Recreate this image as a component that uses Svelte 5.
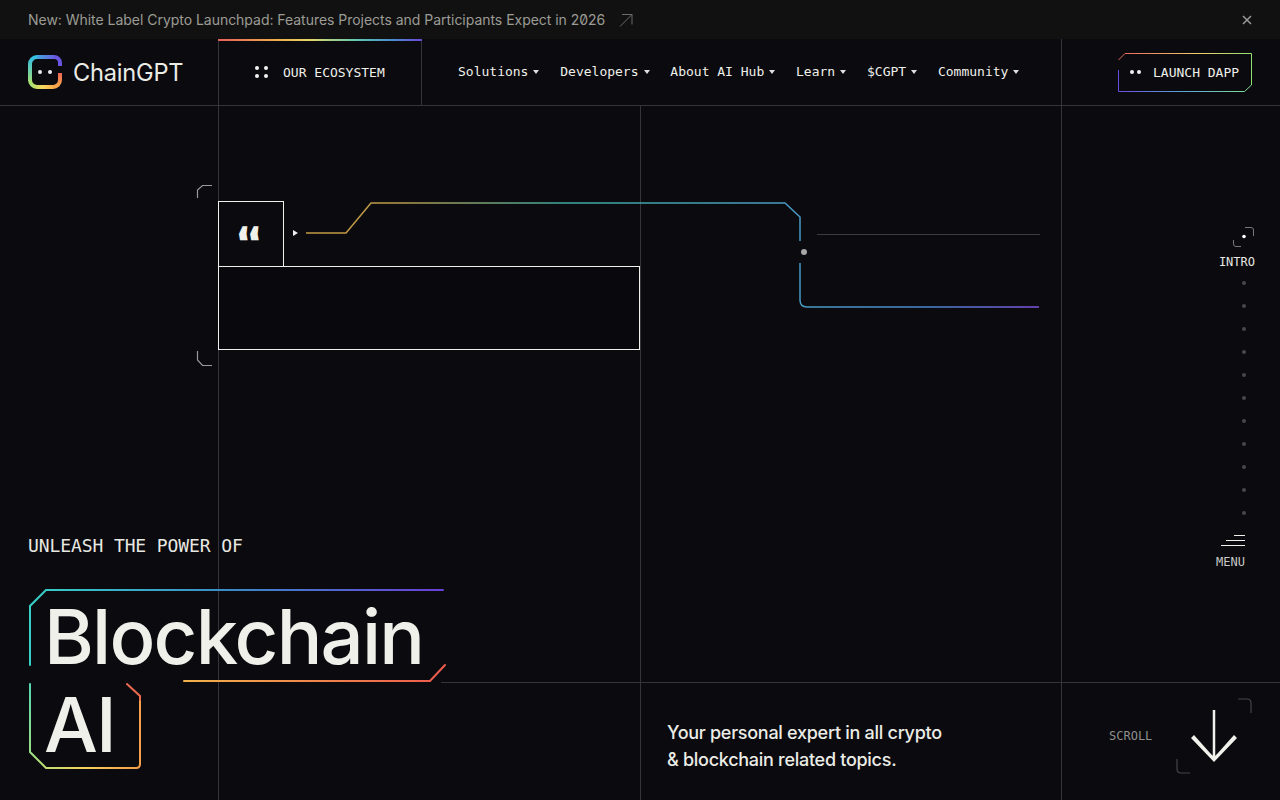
<script>
  const nav = ["Solutions", "Developers", "About AI Hub", "Learn", "$CGPT", "Community"];
  const railDots = Array.from({ length: 11 });
</script>

<div class="page">
  <div class="promo">
    <span class="promo-text">New: White Label Crypto Launchpad: Features Projects and Participants Expect in 2026</span>
    <svg class="promo-arrow" width="14" height="14" viewBox="0 0 14 14" fill="none" stroke="#6b6b68">
      <path d="M1 13.500 13 1.500M3 1.500h10v10" />
    </svg>
    <svg class="promo-close" width="10" height="10" viewBox="0 0 10 10" fill="none" stroke="#9a9a9a" stroke-width="1.500">
      <path d="M1 1l8 8M9 1 1 9" />
    </svg>
  </div>

  <header class="header">
    <div class="brand">
      <svg width="36" height="36" viewBox="0 0 36 36" fill="none" stroke-width="4">
        <defs>
          <linearGradient id="lg-a" gradientUnits="userSpaceOnUse" x1="4" y1="0" x2="30" y2="0"><stop offset="0" stop-color="#35c0e0" /><stop offset="1" stop-color="#6a55e0" /></linearGradient>
          <linearGradient id="lg-b" gradientUnits="userSpaceOnUse" x1="0" y1="4" x2="0" y2="30"><stop offset="0" stop-color="#35c0e0" /><stop offset="1" stop-color="#a8e070" /></linearGradient>
          <linearGradient id="lg-c" gradientUnits="userSpaceOnUse" x1="4" y1="0" x2="28" y2="0"><stop offset="0" stop-color="#a8e070" /><stop offset=".5" stop-color="#f6d85c" /><stop offset="1" stop-color="#f7a64a" /></linearGradient>
          <linearGradient id="lg-d" gradientUnits="userSpaceOnUse" x1="0" y1="32" x2="0" y2="18"><stop offset="0" stop-color="#f7a64a" /><stop offset="1" stop-color="#ee5f54" /></linearGradient>
        </defs>
        <path d="M10 3h17" stroke="url(#lg-a)" />
        <path d="M27 3a6 6 0 0 1 6 6v3" stroke="#6a55e0" />
        <path d="M10 3a7 7 0 0 0-7 7v16" stroke="url(#lg-b)" />
        <path d="M3 26a7 7 0 0 0 7 7h16" stroke="url(#lg-c)" />
        <path d="M26 33a7 7 0 0 0 7-7v-7" stroke="url(#lg-d)" />
        <circle cx="13" cy="18" r="2" fill="#eee" stroke="none" />
        <circle cx="23" cy="18" r="2" fill="#eee" stroke="none" />
      </svg>
      <span class="brand-name">ChainGPT</span>
    </div>

    <div class="eco-tab">
      <span class="dots-4"><i></i><i></i><i></i><i></i></span>
      <span>OUR ECOSYSTEM</span>
    </div>

    <nav class="nav">
      {#each nav as item}
        <span class="nav-item">{item}<i class="caret"></i></span>
      {/each}
    </nav>

    <div class="cta-cell">
      <div class="cta">
        <svg class="cta-frame" width="135" height="40" viewBox="0 0 135 40" fill="none">
          <defs>
            <linearGradient id="cta-top" gradientUnits="userSpaceOnUse" x1="0" y1="0" x2="134" y2="0"><stop offset="0" stop-color="#e8645a" /><stop offset=".6" stop-color="#f2cf6e" /><stop offset="1" stop-color="#8fe070" /></linearGradient>
            <linearGradient id="cta-bot" gradientUnits="userSpaceOnUse" x1="0" y1="0" x2="134" y2="0"><stop offset="0" stop-color="#6a4de0" /><stop offset=".5" stop-color="#5aa8d8" /><stop offset="1" stop-color="#80e090" /></linearGradient>
          </defs>
          <path d="M.5 7 7 .5h126.500V32" stroke="url(#cta-top)" />
          <path d="M.5 17V38.500h126l7-6.500" stroke="url(#cta-bot)" />
        </svg>
        <span class="dots-2"><i></i><i></i></span>
        <span>LAUNCH DAPP</span>
      </div>
    </div>
  </header>

  <main class="stage">
    <div class="guides"><i></i><i></i><i></i></div>

    <svg class="art" width="1280" height="694" viewBox="0 106 1280 694" fill="none">
      <defs>
        <linearGradient id="wire" gradientUnits="userSpaceOnUse" x1="306" y1="0" x2="1039" y2="0">
          <stop offset="0" stop-color="#c49a42" />
          <stop offset=".12" stop-color="#bc9a48" />
          <stop offset=".35" stop-color="#3fa89e" />
          <stop offset=".68" stop-color="#4a9ac4" />
          <stop offset=".85" stop-color="#4a85cc" />
          <stop offset="1" stop-color="#7f52e0" />
        </linearGradient>
        <linearGradient id="title-a" gradientUnits="userSpaceOnUse" x1="30" y1="0" x2="443" y2="0">
          <stop offset="0" stop-color="#36d0c8" />
          <stop offset=".5" stop-color="#3b88c8" />
          <stop offset="1" stop-color="#6a3fd8" />
        </linearGradient>
        <linearGradient id="title-b" gradientUnits="userSpaceOnUse" x1="184" y1="0" x2="445" y2="0">
          <stop offset="0" stop-color="#f2b24a" />
          <stop offset="1" stop-color="#ee5a4e" />
        </linearGradient>
        <linearGradient id="title-c" gradientUnits="userSpaceOnUse" x1="30" y1="684" x2="140" y2="760">
          <stop offset="0" stop-color="#55d8b0" />
          <stop offset=".35" stop-color="#a8e07c" />
          <stop offset=".7" stop-color="#f6d25c" />
          <stop offset="1" stop-color="#f6a04a" />
        </linearGradient>
      </defs>

      <path d="M197.500 198v-8l5-4.500h9.500M197.500 351v9l5 5.500h9.500" stroke="#999" stroke-width="1.200" />
      <path d="M293 230l5 3-5 3z" fill="#eee" />
      <path d="M306 233h40l25-30h414l15 14v24M800 263v37q0 7 7 7h232" stroke="url(#wire)" stroke-width="1.500" />
      <path d="M817 234.500h223" stroke="#3c3c40" />
      <circle cx="804" cy="252" r="3" fill="#a8a8a8" />

      <path d="M30 665V606l16-16h397" stroke="url(#title-a)" stroke-width="2" stroke-linecap="round" />
      <path d="M184 681h246l15-16" stroke="url(#title-b)" stroke-width="2" stroke-linecap="round" />
      <path d="M30 684v68l16 16h90" stroke="url(#title-c)" stroke-width="2" stroke-linecap="round" />
      <path d="M136 768q4 0 4-4v-64" stroke="#f6a04a" stroke-width="2" />
      <path d="M140 700v-4l-13-12" stroke="#ec6a50" stroke-width="2" stroke-linecap="round" />

      <path d="M1238 699h9q4 0 4 4v10M1177 759v10q0 4 4 4h9" stroke="#44444a" stroke-width="1.200" />
      <path d="M1214 710v48" stroke="#f2f2ec" stroke-width="2.500" />
      <path d="M1191 738l3-3 16 18 4 4 4-4 16-18 3 3-23 24z" fill="#f2f2ec" />
    </svg>

    <section class="quote">
      <div class="quote-mark"><span>“</span></div>
      <div class="quote-body"></div>
    </section>

    <aside class="rail">
      <svg class="rail-icon" width="24" height="22" viewBox="0 0 24 22" fill="none" stroke="#77777c">
        <path d="M14 1.500h6q2.500 0 2.500 2.500v6M2.500 14v4q0 2.500 2.500 2.500h5" />
        <circle cx="13" cy="10.500" r="1.800" fill="#fff" stroke="none" />
      </svg>
      <span class="rail-label">INTRO</span>
      <div class="rail-dots">
        {#each railDots as _}
          <i></i>
        {/each}
      </div>
      <div class="burger"><i></i><i></i><i></i></div>
      <span class="rail-label menu">MENU</span>
    </aside>

    <div class="bottom">
      <div class="hero">
        <p class="eyebrow">UNLEASH THE POWER OF</p>
        <h1 class="title">Blockchain<br />AI</h1>
      </div>
      <div class="cell-line"></div>
      <div class="cell-line tagline">
        <p>Your personal expert in all crypto<br />&amp; blockchain related topics.</p>
      </div>
      <div class="cell-line scroll">
        <span>SCROLL</span>
      </div>
    </div>
  </main>
</div>

<style>
  :global(body) {
    background: #0a0a0f;
  }

  .page {
    width: 1280px;
    height: 800px;
    overflow: hidden;
    display: flex;
    flex-direction: column;
    background: #0a0a0f;
    color: #f0f0ea;
    font-family: "Inter", "Liberation Sans", sans-serif;
  }

  .promo {
    height: 39px;
    flex: none;
    display: flex;
    align-items: center;
    padding: 0 28px;
    background: #111112;
    color: #9c9c94;
    font-size: 14px;
    letter-spacing: -0.03px;
    font-feature-settings: "zero";
  }

  .promo-arrow {
    margin-left: 14px;
  }

  .promo-close {
    margin-left: auto;
    margin-right: 0;
  }

  .header {
    height: 67px;
    flex: none;
    display: flex;
    border-bottom: 1px solid #34343a;
    box-sizing: border-box;
    font-family: "DejaVu Sans Mono", monospace;
    font-size: 13px;
  }

  .brand {
    width: 218px;
    flex: none;
    display: flex;
    align-items: center;
    padding: 0 0 0 27px;
    box-sizing: border-box;
    gap: 10px;
  }

  .brand-name {
    font-family: "Inter", sans-serif;
    font-size: 23.600px;
    letter-spacing: -0.2px;
    color: #ecece6;
  }

  .eco-tab {
    position: relative;
    width: 204px;
    flex: none;
    box-sizing: border-box;
    display: flex;
    align-items: center;
    gap: 15px;
    padding-left: 36px;
    border-left: 1px solid #34343a;
    border-right: 1px solid #34343a;
  }

  .eco-tab::before {
    content: "";
    position: absolute;
    left: -1px;
    right: -1px;
    top: 0;
    height: 2px;
    background: linear-gradient(90deg, #e8605a, #f0b04c 30%, #e6d86a 45%, #5fc8b0 68%, #4a8fd0 85%, #6a48d8);
  }

  .dots-4 {
    display: grid;
    grid-template-columns: 4px 4px;
    gap: 4px 5px;
  }

  .dots-4 i,
  .dots-2 i {
    width: 4px;
    height: 4px;
    border-radius: 50%;
    background: #f2f2f2;
  }

  .nav {
    width: 640px;
    flex: none;
    box-sizing: border-box;
    display: flex;
    align-items: center;
    gap: 20.800px;
    padding: 0 0 2px 36px;
    border-right: 1px solid #34343a;
  }

  .nav-item {
    display: flex;
    align-items: center;
    gap: 5px;
    color: #f0f0ea;
  }

  .caret {
    width: 0;
    height: 0;
    margin-top: 1px;
    border-left: 3.500px solid transparent;
    border-right: 3.500px solid transparent;
    border-top: 4px solid #e0e0e0;
  }

  .cta-cell {
    flex: 1;
    display: flex;
    align-items: center;
    justify-content: flex-end;
    padding: 1px 27px 0 0;
  }

  .cta {
    position: relative;
    width: 135px;
    height: 40px;
    box-sizing: border-box;
    display: flex;
    align-items: center;
    gap: 12px;
    padding: 0 0 1px 12px;
  }

  .cta-frame {
    position: absolute;
    inset: 0;
  }

  .dots-2 {
    display: flex;
    gap: 3px;
  }

  .stage {
    position: relative;
    flex: 1;
    display: flex;
    flex-direction: column;
    justify-content: space-between;
  }

  .guides {
    position: absolute;
    inset: 0;
  }

  .guides i {
    position: absolute;
    top: 0;
    bottom: 0;
    width: 1px;
    background: #34343a;
  }

  .guides i:nth-child(1) {
    left: 218px;
  }

  .guides i:nth-child(2) {
    left: 640px;
  }

  .guides i:nth-child(3) {
    left: 1061px;
  }

  .art {
    position: absolute;
    inset: 0;
    pointer-events: none;
  }

  .quote {
    position: relative;
    margin: 95px 0 0 218px;
    width: 422px;
  }

  .quote-mark {
    width: 66px;
    height: 65px;
    box-sizing: border-box;
    padding-top: 20px;
    border: 1px solid #f0f0ea;
    border-bottom: 0;
    display: flex;
    justify-content: center;
    font-family: "DejaVu Sans", sans-serif;
    font-weight: 700;
    font-size: 45px;
    line-height: 44px;
    background: #0a0a0f;
  }

  .quote-mark span {
    display: block;
    transform: skewX(10deg);
  }

  .quote-body {
    height: 84px;
    box-sizing: border-box;
    border: 1px solid #f0f0ea;
    background: #09090d;
  }

  .rail {
    position: absolute;
    top: 120px;
    right: 25px;
    width: 40px;
    display: flex;
    flex-direction: column;
    align-items: flex-end;
    font-family: "DejaVu Sans Mono", monospace;
  }

  .rail-icon {
    display: block;
  }

  .rail-label {
    margin-top: 7px;
    font-size: 12px;
    line-height: 14px;
    color: #e8e8e2;
  }

  .rail-dots {
    width: 100%;
    display: flex;
    flex-direction: column;
    align-items: flex-end;
    gap: 19px;
    margin-top: 12px;
    padding-right: 9px;
    box-sizing: border-box;
  }

  .rail-dots i {
    width: 4px;
    height: 4px;
    border-radius: 50%;
    background: #48484c;
  }

  .burger {
    display: flex;
    flex-direction: column;
    align-items: flex-end;
    gap: 4px;
    margin: 20px 10px 0 0;
  }

  .burger i {
    height: 1px;
    background: #f0f0ea;
  }

  .burger i:nth-child(1) {
    width: 11px;
  }

  .burger i:nth-child(2) {
    width: 19px;
  }

  .burger i:nth-child(3) {
    width: 24px;
  }

  .menu {
    margin: 9px 10px 0 0;
    color: #c8c8c4;
  }

  .bottom {
    position: relative;
    display: grid;
    grid-template-columns: 441px 199px 421px 219px;
    align-items: end;
  }

  .hero {
    grid-row: 1;
    padding: 0 0 0 28px;
  }

  .eyebrow {
    margin: 0;
    font-family: "DejaVu Sans Mono", monospace;
    font-size: 18px;
    letter-spacing: -0.1px;
    line-height: 22px;
    color: #e8e8e2;
  }

  .title {
    margin: 35px 0 32px 16px;
    font-size: 76px;
    font-weight: 500;
    letter-spacing: -1.800px;
    line-height: 88px;
    color: #f0f0ea;
  }

  .cell-line {
    height: 118px;
    box-sizing: border-box;
    border-top: 1px solid #34343a;
  }

  .tagline {
    padding: 36px 0 0 27px;
    font-size: 18px;
    font-weight: 500;
    letter-spacing: -0.280px;
    line-height: 27px;
    color: #ecece6;
  }

  .tagline p {
    margin: 0;
  }

  .scroll {
    padding: 46px 0 0 48px;
    font-family: "DejaVu Sans Mono", monospace;
    font-size: 12px;
    color: #8f8f8c;
  }
</style>
